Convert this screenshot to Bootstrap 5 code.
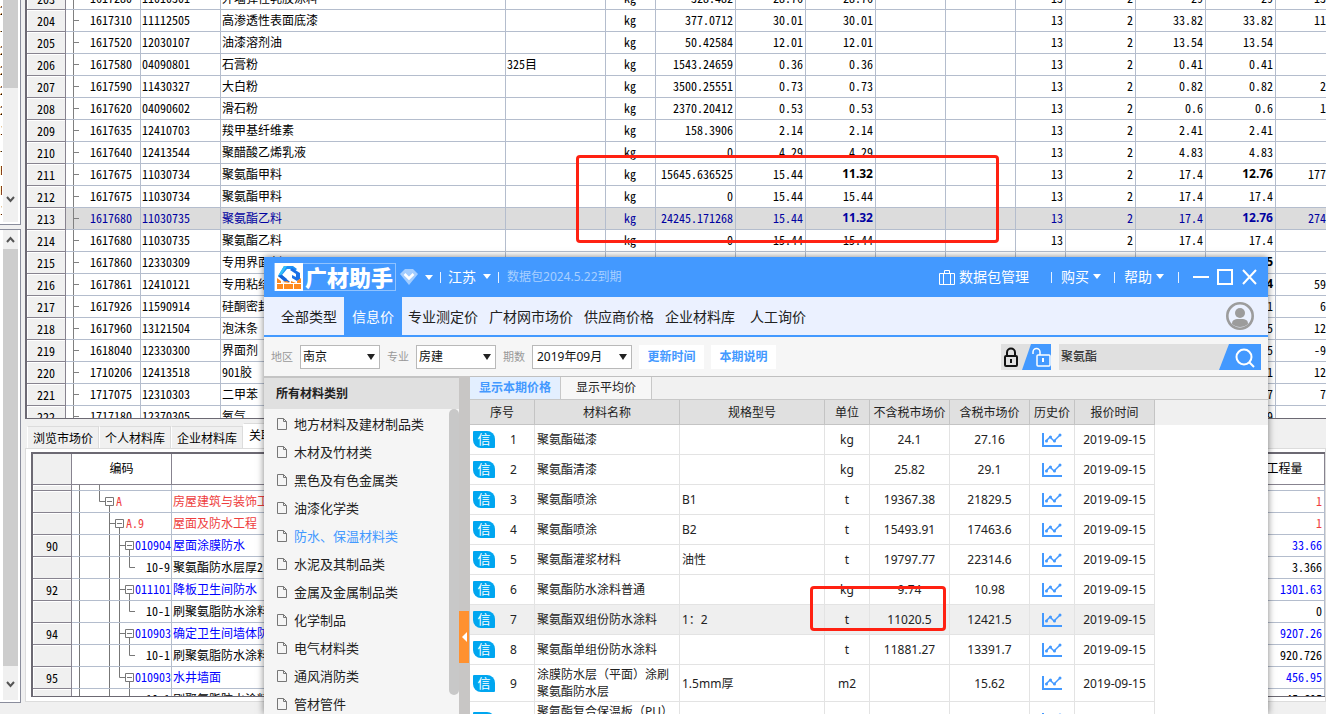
<!DOCTYPE html>
<html lang="zh-CN">
<head>
<meta charset="utf-8">
<meta name="viewport" content="width=device-width, initial-scale=1">
<title>广材助手</title>
<link href="https://cdn.jsdelivr.net/npm/bootstrap@5.3.0/dist/css/bootstrap.min.css" rel="stylesheet">
<style>
  :root { --blue: #4399ff; --line: #b4bdcd; --dark: #87838f; --chrome: #f0f0f0; --mark: #ff2112; }
  body { font: 12px/18px "Noto Sans CJK SC", sans-serif; color: #000; background: var(--chrome); }
  button { font: inherit; color: inherit; border: 0; background: none; padding: 0; }

  /* left strip */
  .strip { width: 25px; }
  .pane { width: 21px; background: #fff; border: solid #8a8d9c; border-width: 0 1px 1px 0; }
  .pane-top { flex: 0 0 225px; }
  .pane-low { margin: 4px 0 11px; border-top-width: 1px; }
  .peek { width: 2px; line-height: 20px; }
  .bar { width: 15px; margin: 0 2px 2px 1px; background: var(--chrome); }
  .thumb { background: #cdcdcd; }
  .bar svg { display: block; margin: 0 auto; }

  /* data sheets */
  .sheet { width: 100%; table-layout: fixed; border-collapse: separate; border-spacing: 0; font-feature-settings: "hwid"; }
  .sheet td, .sheet th { height: 22px; padding: 0 2px 2px; border: solid var(--line); border-width: 0 1px 1px 0; white-space: nowrap; overflow: hidden; font-weight: 400; }
  .sheet td { padding-left: 1px; }
  .sheet tbody th { background: var(--chrome); border-color: var(--dark); text-align: center; padding-bottom: 0; box-shadow: inset 1px 1px #fff; }
  .sheet .num { text-align: right; }
  .sheet .cut { padding: 0 0 2px; border-right: 0; }
  .sheet b { font: 700 12px/18px "Noto Sans", sans-serif; }
  .sheet .picked td { background: #dcdcdc; color: #0000a0; }
  .frame-top { flex: 1 1 0; min-height: 0; border: solid #6c6973; border-width: 0 0 1px 2px; background: #fff; }
  .frame-top .sheet { margin-top: -12px; }
  .branch { position: relative; }
  .branch::before { content: ""; position: absolute; left: 7px; top: 0; bottom: 0; border-left: 1px solid #808080; }
  .branch::after { content: ""; position: absolute; left: 7px; top: 10px; width: 6px; border-top: 1px solid #808080; }
  .sheet td.branch { padding-right: 8px; text-align: right; }
  .marker { position: absolute; border: 3px solid var(--mark); border-radius: 4px; pointer-events: none; z-index: 5; }
  .marker-a { left: 549px; top: 155px; width: 423px; height: 88px; }
  .marker-b { left: 340px; top: 209px; width: 136px; height: 45px; }

  .low { flex: 0 0 295px; min-height: 0; }
  .tabs-low { flex: 0 0 28px; padding: 4px 0 0 2px; }
  .tabs-low button { height: 22px; padding: 0 5px; border: 1px solid #dcdcdc; border-left-color: #fff; border-bottom: 0; width: 72px; }
  .tabs-low button.on { height: 25px; background: #fff; padding-bottom: 2px; }
  .card-low { flex: 1 1 0; min-height: 0; background: #fff; border: 1px solid #dcdcdc; margin-bottom: 12px; padding: 3px 0 4px 5px; }
  .frame-low { border: solid #6c6973; border-width: 2px 0 1px 2px; }
  .sheet thead th { height: 31px; border-color: var(--dark); text-align: center; }
  .sheet .thin td, .sheet .thin th { height: 6px; line-height: 0; padding: 0; }
  .sheet td.tree { padding: 0; }
  .tree svg { display: block; flex: none; }
  .red { color: #ee3e3e; } .ink { color: #00f; }
  .tree > div { height: 21px; line-height: 20px; }

  /* assistant window */
  .win { position: absolute; left: 264px; right: 58px; top: 257px; bottom: 0; background: #fff; box-shadow: 0 0 7px rgba(0,0,0,.5); font-family: "Noto Sans", "Noto Sans CJK SC", sans-serif; color: #222; z-index: 10; }
  .titlebar { height: 40px; background: var(--blue); color: #fff; padding: 0 10px; font-size: 14px; }
  .brand { height: 28px; border: 1px solid #8fc2ff; }
  .brand span { font-size: 22px; line-height: 26px; font-weight: 900; padding: 0 2px; }
  .down::after { content: ""; display: inline-block; border: solid transparent; border-width: 5px 4px 0; border-top-color: currentColor; vertical-align: 3px; margin-left: 7px; }
  .down.tight::after { margin-left: 4px; }
  .sep { width: 1px; height: 11px; background: #e6f1ff; margin: 0 7px; }
  .sep.roomy { margin: 0 9px 0 13px; }
  .sep.last { margin: 0 14px; }
  .pack { margin-right: 9px; }
  .faint { font-size: 12px; color: #a9d0ff; }
  .menu { height: 40px; background: #ebf1ff; border-bottom: 2px solid var(--blue); font-size: 14px; padding: 0 14px 0 9px; }
  .menu a { color: #222; text-decoration: none; display: flex; align-items: center; height: 38px; padding: 4px 0 2px; margin-right: 11px; }
  .menu a.on { background: var(--blue); color: #fff; padding: 4px 8px 2px; margin: 0 6px 0 -4px; }
  .menu a.first { padding-left: 8px; }
  .filters { height: 39px; background: #f6f6f6; padding: 0 7px; }
  .filters label { font-size: 11px; color: #999; margin-right: 7px; }
  .pick { position: relative; width: 80px; margin-right: 7px; }
  .pick.wide { width: 100px; }
  .pick::after { content: ""; position: absolute; right: 5px; top: 9px; border: solid transparent; border-width: 6px 4px 0; border-top-color: #222; pointer-events: none; }
  .pick select { appearance: none; width: 100%; height: 24px; border: 1px solid #b9b9b9; border-radius: 0; background: #fff; padding: 0 2px; color: #111; font: inherit; }
  .pick.wide select { padding-left: 4px; }
  .chip { width: 65px; height: 24px; background: #fff; color: var(--blue); font-weight: 700; margin-right: 7px; }
  .find { width: 202px; height: 26px; background: #e0e0e0; }
  .find input { border: 0; background: none; padding: 0 2px; outline: 0; min-width: 0; color: #222; }
  .side { width: 195px; background: #f5f5f5; border-top: 2px solid #c4c4c4; }
  .side h2 { font-size: 12px; line-height: 31px; font-weight: 700; padding-left: 12px; background: #e0e0e0; margin: 0; }
  .side a { display: flex; align-items: center; gap: 7px; height: 28px; padding: 1px 0 0 13px; font-size: 13px; color: #222; text-decoration: none; white-space: nowrap; }
  .side a.on { color: var(--blue); }
  .side .rail { width: 10px; }
  .side .knob { height: 286px; background: #c8c8c8; border-radius: 5px; }
  .split { width: 11px; background: #c8c6c5; }
  .split button { width: 10px; height: 52px; margin-top: 235px; background: #ff9130; }
  .main { border-top: 1px solid #c0c0c0; position: relative; }
  .tabs-top { background: #f1f1f1; height: 23px; border-bottom: 1px solid #c8c8c8; }
  .tabs-top button { width: 91px; border-right: 1px solid #c8c8c8; background: #f7f7f7; }
  .tabs-top button.on { background: #e3efff; color: var(--blue); font-weight: 700; }
  .headfill { height: 25px; background: var(--chrome); }
  .prices { width: 685px; table-layout: fixed; border-collapse: separate; border-spacing: 0; background: #fff; line-height: 17px; }
  .prices th { height: 25px; background: #e0e0e0; border: solid #c4c4c4; border-width: 0 1px 1px 0; font-weight: 400; text-align: center; padding: 0; white-space: nowrap; }
  .prices td { height: 30px; padding: 0 2px; border: solid #e3e3e3; border-width: 0 1px 1px 0; }
  .prices .tall td { height: 37px; }
  .prices .here td { background: #efefef; }
  .prices .c { text-align: center; }
  .prices svg { display: block; margin: 0 auto; }
  .seq { display: flex; align-items: center; padding-left: 1px; }
  .seq span { width: 22px; height: 17px; line-height: 16px; background: #00a6f0; color: #fff; border-radius: 1px 8px 1px 8px; text-align: center; font-size: 13px; }
  .seq i { font-style: normal; flex: 1; text-align: center; }
</style>
</head>
<body class="vh-100 overflow-hidden d-flex position-relative">

<aside class="strip d-flex flex-column flex-shrink-0">
  <div class="pane pane-top d-flex overflow-hidden">
    <div class="peek overflow-hidden">2<br>-<br>2<br>2<br>2<br>2<br>1<br>-<br>E<br>F<br>1</div>
    <div class="bar d-flex flex-column">
      <div class="thumb" style="height:88px"></div>
      <svg class="mt-auto mb-3" width="9" height="12" viewBox="0 0 9 12"><path d="M1 3l3.500 4L8 3" fill="none" stroke="#555" stroke-width="2"/></svg>
    </div>
  </div>
  <div class="pane pane-low d-flex flex-fill">
    <div class="peek"></div>
    <div class="bar d-flex flex-column">
      <svg class="my-1" width="9" height="11" viewBox="0 0 9 11"><path d="M1 8l3.500-4L8 8" fill="none" stroke="#555" stroke-width="2"/></svg>
      <div class="thumb flex-fill"></div>
      <svg class="my-2" width="9" height="18" viewBox="0 0 9 18"><path d="M1 8l3.500 4L8 8" fill="none" stroke="#555" stroke-width="2"/></svg>
    </div>
  </div>
</aside>

<main class="flex-fill d-flex flex-column overflow-hidden">
  <section class="frame-top overflow-hidden position-relative">
    <table class="sheet">
      <colgroup><col style="width:39px"><col style="width:75px"><col style="width:80px"><col style="width:285px"><col style="width:100px"><col style="width:50px"><col style="width:80px"><col style="width:70px"><col style="width:70px"><col style="width:70px"><col style="width:70px"><col style="width:50px"><col style="width:70px"><col style="width:70px"><col style="width:70px"><col></colgroup>
      <tbody id="materials"></tbody>
    </table>
    <div class="marker marker-a"></div>
  </section>

  <section class="low d-flex flex-column">
    <div class="tabs-low d-flex align-items-end">
      <button type="button">浏览市场价</button><button type="button">个人材料库</button><button type="button">企业材料库</button><button type="button" class="on text-start">关联项目</button>
    </div>
    <div class="card-low overflow-hidden d-flex">
      <div class="frame-low flex-fill overflow-hidden">
        <table class="sheet">
          <colgroup><col style="width:39px"><col style="width:100px"><col><col style="width:80px"></colgroup>
          <thead><tr><th style="background:#f0f0f0"></th><th>编码</th><th></th><th>工程量</th></tr></thead>
          <tbody id="items"></tbody>
        </table>
      </div>
    </div>
  </section>
</main>

<section class="win d-flex flex-column overflow-visible">
  <header class="titlebar d-flex align-items-center flex-shrink-0">
    <div class="brand d-flex align-items-center">
      <svg width="28" height="28" viewBox="0 0 28 28"><path d="M0 0h28v28H0z" fill="#fff"/><path d="M9 3h9l4 3-3 3-3-3h-4l-5 6 5 4-2 2-7-5z" fill="#1e90f5"/><path d="M9 3h3L7 11l-4 2z" fill="#2fc0fa"/><path d="M3 13l7 6h5L7 12z" fill="#1560d6"/><path d="M17 5l8 5v6l-3 2-5-3v-3l4 2v-3l-6-4z" fill="#1a6fe6"/><path d="M2 15l4 3v2H2zM26 15v5h-4v-2zM2 21h6v5H2zM9 21h9v5H9zM19 21h7v5h-7zM7 19l5-1 3 2zM16 18l5 2h-5z" fill="#ff8a1e"/></svg>
      <span>广材助手</span>
    </div>
    <button type="button" class="down ms-1 d-flex align-items-center" aria-label="会员">
      <svg width="18" height="16" viewBox="0 0 18 16"><path d="M5 0h8l5 5-9 11L0 5z" fill="#a3cdff"/><path d="M4.500 5L9 9.500 13.500 5" fill="none" stroke="#fff" stroke-width="2.500"/></svg>
    </button>
    <i class="sep"></i>
    <button type="button" class="down">江苏</button>
    <i class="sep me-2"></i>
    <span class="faint">数据包2024.5.22到期</span>
    <button type="button" class="pack ms-auto d-flex align-items-center gap-1">
      <svg width="16" height="15" viewBox="0 0 16 15" fill="none" stroke="#fff"><path d="M.5 3.500h15v11H.5zM5.500 3.500v-3h5v3M4.500 4v10M11.500 4v10"/></svg>
      数据包管理</button>
    <i class="sep roomy"></i>
    <button type="button" class="down tight">购买</button>
    <i class="sep roomy"></i>
    <button type="button" class="down tight">帮助</button>
    <i class="sep last"></i>
    <button type="button" class="d-flex me-2" aria-label="最小化"><svg width="16" height="16" viewBox="0 0 16 16"><path d="M0 8h16" stroke="#fff" stroke-width="2"/></svg></button>
    <button type="button" class="d-flex me-2" aria-label="最大化"><svg width="16" height="16" viewBox="0 0 16 16"><path d="M1 1h14v14H1z" fill="none" stroke="#fff" stroke-width="2"/></svg></button>
    <button type="button" class="d-flex" aria-label="关闭"><svg width="17" height="16" viewBox="0 0 17 16"><path d="M2 1l13 14M15 1L2 15" stroke="#fff" stroke-width="2"/></svg></button>
  </header>

  <nav class="menu d-flex align-items-center flex-shrink-0">
    <a href="#" class="first">全部类型</a><a href="#" class="on">信息价</a><a href="#">专业测定价</a><a href="#">广材网市场价</a><a href="#">供应商价格</a><a href="#">企业材料库</a><a href="#" class="ms-1">人工询价</a>
    <button type="button" class="ms-auto" aria-label="账户"><svg class="d-block" width="28" height="28" viewBox="0 0 28 28"><circle cx="14" cy="14" r="12.700" fill="none" stroke="#9c9c9c" stroke-width="2.600"/><circle cx="14" cy="11" r="5" fill="#9c9c9c"/><path d="M6 22c0-5 4-5 8-5s8 0 8 5c-4 4-12 4-16 0z" fill="#9c9c9c"/></svg></button>
  </nav>

  <form class="filters d-flex align-items-center flex-shrink-0">
    <label for="area">地区</label><div class="pick"><select id="area"><option>南京</option></select></div>
    <label for="trade">专业</label><div class="pick"><select id="trade"><option>房建</option></select></div>
    <label for="issue">期数</label><div class="pick wide"><select id="issue"><option>2019年09月</option></select></div>
    <button type="button" class="chip">更新时间</button><button type="button" class="chip">本期说明</button>
    <button type="button" class="ms-auto me-2" aria-label="锁定"><svg class="d-block" width="50" height="26" viewBox="0 0 50 26"><path d="M0 0h50v26H0z" fill="#e0e0e0"/><path d="M30 0h20v26H21z" fill="#4399ff"/><g fill="none" stroke="#111" stroke-width="2"><rect x="4" y="12" width="12" height="10" rx="1"/><path d="M6 12V8.500a4 4 0 0 1 8 0V12"/></g><path d="M9 15h2v4H9z" fill="#111"/><g fill="none" stroke="#fff" stroke-width="1.500"><rect x="36" y="11" width="13" height="11" rx="1"/><path d="M39 11V8a3.500 3.500 0 0 0-7 0v2"/></g><path d="M41 14h2v4h-2z" fill="#fff"/></svg></button>
    <div class="find d-flex">
      <input type="text" class="flex-fill" value="聚氨酯" aria-label="搜索材料">
      <button type="button" aria-label="搜索"><svg class="d-block" width="42" height="26" viewBox="0 0 42 26"><path d="M10 0h32v26H0z" fill="#4399ff"/><circle cx="25" cy="13" r="7.500" fill="none" stroke="#fff" stroke-width="2"/><path d="M30 18l5 5" stroke="#fff" stroke-width="2"/></svg></button>
    </div>
  </form>

  <div class="d-flex flex-fill overflow-hidden">
    <aside class="side d-flex flex-column flex-shrink-0">
      <h2>所有材料类别</h2>
      <div class="d-flex flex-fill overflow-hidden">
        <nav id="cats" class="flex-fill"></nav>
        <div class="rail flex-shrink-0"><div class="knob"></div></div>
      </div>
    </aside>
    <div class="split flex-shrink-0"><button type="button" aria-label="收起"><svg class="d-block mx-auto" width="5" height="10" viewBox="0 0 5 10"><path d="M5 0v10L0 5z" fill="#fff"/></svg></button></div>
    <div class="main flex-fill d-flex flex-column overflow-hidden">
      <div class="tabs-top d-flex flex-shrink-0"><button type="button" class="on">显示本期价格</button><button type="button">显示平均价</button></div>
      <div class="d-flex flex-fill overflow-hidden">
        <div>
        <table class="prices">
          <colgroup><col style="width:65px"><col style="width:145px"><col style="width:145px"><col style="width:45px"><col style="width:80px"><col style="width:80px"><col style="width:45px"><col style="width:80px"></colgroup>
          <thead><tr><th>序号</th><th>材料名称</th><th>规格型号</th><th>单位</th><th>不含税市场价</th><th>含税市场价</th><th>历史价</th><th>报价时间</th></tr></thead>
          <tbody id="prices"></tbody>
        </table>
        </div>
        <div class="flex-fill"><div class="headfill"></div></div>
      </div>
      <div class="marker marker-b"></div>
    </div>
  </div>
</section>

<script src="https://cdn.jsdelivr.net/npm/bootstrap@5.3.0/dist/js/bootstrap.bundle.min.js"></script>
<script>
  // no | id | code | name | spec | qty | price | market | tax-free | taxed | total
  const materials = `203|1617280|11010301|外墙弹性乳胶涂料||328.482|28.76|28.76|29|29|13
204|1617310|11112505|高渗透性表面底漆||377.0712|30.01|30.01|33.82|33.82|11
205|1617520|12030107|油漆溶剂油||50.42584|12.01|12.01|13.54|13.54|
206|1617580|04090801|石膏粉|325目|1543.24659|0.36|0.36|0.41|0.41|
207|1617590|11430327|大白粉||3500.25551|0.73|0.73|0.82|0.82|2
208|1617620|04090602|滑石粉||2370.20412|0.53|0.53|0.6|0.6|1
209|1617635|12410703|羧甲基纤维素||158.3906|2.14|2.14|2.41|2.41|
210|1617640|12413544|聚醋酸乙烯乳液||0|4.29|4.29|4.83|4.83|
211|1617675|11030734|聚氨酯甲料||15645.636525|15.44|*11.32|17.4|*12.76|177
212|1617675|11030734|聚氨酯甲料||0|15.44|15.44|17.4|17.4|
213|1617680|11030735|聚氨酯乙料||24245.171268|15.44|*11.32|17.4|*12.76|274
214|1617680|11030735|聚氨酯乙料||0|15.44|15.44|17.4|17.4|
215|1617860|12330309|专用界面剂||||||*5|
216|1617861|12410121|专用粘结剂||||||*4|59
217|1617926|11590914|硅酮密封胶||||||1|6
218|1617960|13121504|泡沫条||||||5|12
219|1618040|12330300|界面剂||||||5|-9
220|1710206|12413518|901胶||||||1|12
221|1717075|12310303|二甲苯||||||7|7
222|1717180|12370305|氧气||||||9|`;
  const val = v => v[0] === '*' ? `<b>${v.slice(1)}</b>` : v;
  document.getElementById('materials').innerHTML = materials.split('\n').map(l => {
    const [no, id, code, name, spec, qty, p1, p2, p3, p4, sum] = l.split('|');
    const n = v => `<td class="num">${val(v)}</td>`;
    const full = no < '215'; // lower rows lie under the assistant window
    return `<tr${no === '213' ? ' class="picked"' : ''}><th>${no}</th><td class="branch">${id}</td><td>${code}</td><td>${name}</td><td>${spec}</td><td class="text-center">${full ? 'kg' : ''}</td>${n(qty)}${n(p1)}${n(p2)}<td></td><td></td>${n(full ? '13' : '')}${n(full ? '2' : '')}${n(p3)}${n(p4)}<td class="num cut">${sum}</td></tr>`;
  }).join('');

  // no | tree shape | code | name | quantity | colour
  const items = `|0|A|房屋建筑与装饰工程|1|red
|1|A.9|屋面及防水工程|1|red
90|2|010904|屋面涂膜防水|33.66|ink
|3|10-9|聚氨酯防水层厚2|3.366|
92|2|011101|降板卫生间防水 |1301.63|ink
|3|10-1|刷聚氨脂防水涂料|0|
94|2|010903|确定卫生间墙体防水|9207.26|ink
|3|10-1|刷聚氨脂防水涂料|920.726|
95|4|010903|水井墙面|456.95|ink
|5|10-1|刷聚氨脂防水涂料|45.695|`;
  const box = x => `M${x - 4}.5 6.500h8v8h-8zM${x - 2} 10.500h5`;
  const trees = [
    [44, `M27.500 0V10.500H33M37.500 15V22${box(37)}`],
    [54, `M37.500 0V22M37.500 10.500H43M47.500 15V22${box(47)}`],
    [63, `M37.500 0V22M47.500 0V22M47.500 10.500H53M57.500 15V22${box(57)}`],
    [74, 'M37.500 0V22M47.500 0V22M57.500 0V10.500H63'],
    [63, `M37.500 0V22M47.500 0V10.500H53M57.500 15V22${box(57)}`],
    [74, 'M37.500 0V22M57.500 0V10.500H63']];
  document.getElementById('items').innerHTML =
    '<tr class="thin"><th></th><td class="tree"><svg width="99" height="5"><path d="M7.500 0V6M27.500 0V6" stroke="#808080"/></svg></td><td></td><td></td></tr>' +
    items.split('\n').map(l => {
      const [no, d, code, name, q, c] = l.split('|'), [w, path] = trees[d];
      return `<tr class="${c}"><th class="text-black">${no}</th><td class="tree"><div class="d-flex overflow-hidden"><svg width="${w}" height="22"><path d="M7.500 0V22${path}" fill="none" stroke="#777"/></svg>${code}</div></td><td>${name}</td><td class="num">${q}</td></tr>`;
    }).join('');

  const page = '<svg width="10" height="12" viewBox="0 0 10 12"><path d="M.5.5h6l3 3v8H.5zM6.500.5v3h3" fill="none" stroke="#777"/></svg>';
  document.getElementById('cats').innerHTML = ['地方材料及建材制品类', '木材及竹材类', '黑色及有色金属类', '油漆化学类', '防水、保温材料类', '水泥及其制品类', '金属及金属制品类', '化学制品', '电气材料类', '通风消防类', '管材管件']
    .map((t, i) => `<a href="#"${i === 4 ? ' class="on"' : ''}>${page}${t}</a>`).join('');

  const prices = `聚氨酯磁漆||kg|24.1|27.16
聚氨酯清漆||kg|25.82|29.1
聚氨酯喷涂|B1|t|19367.38|21829.5
聚氨酯喷涂|B2|t|15493.91|17463.6
聚氨酯灌浆材料|油性|t|19797.77|22314.6
聚氨酯防水涂料普通||kg|9.74|10.98
聚氨酯双组份防水涂料|1：2|t|11020.5|12421.5
聚氨酯单组份防水涂料||t|11881.27|13391.7
涂膜防水层（平面）涂刷聚氨酯防水层|1.5mm厚|m2||15.62
聚氨酯复合保温板（PU）防火隔离||||`;
  const chart = '<svg width="20" height="14" viewBox="0 0 20 14" fill="none" stroke="#4399ff"><path d="M1 0v13h19" stroke-width="2"/><path d="M4 8l4-4 4 4 6-6" stroke-width="1.500"/><g fill="#4399ff" stroke="none"><circle cx="4.500" cy="8" r="1.500"/><circle cx="8.500" cy="4" r="1.500"/><circle cx="12.500" cy="8" r="1.500"/><circle cx="18" cy="2" r="1.500"/></g></svg>';
  document.getElementById('prices').innerHTML = prices.split('\n').map((l, i) => {
    const [name, spec, unit, a, b] = l.split('|');
    const cls = i === 6 ? 'here' : i > 7 ? 'tall' : '';
    return `<tr class="${cls}"><td><div class="seq"><span>信</span><i>${i + 1}</i></div></td><td>${name}</td><td>${spec}</td><td class="c">${unit}</td><td class="c">${a}</td><td class="c">${b}</td><td>${chart}</td><td class="c">${unit ? '2019-09-15' : ''}</td></tr>`;
  }).join('');
</script>
</body>
</html>
